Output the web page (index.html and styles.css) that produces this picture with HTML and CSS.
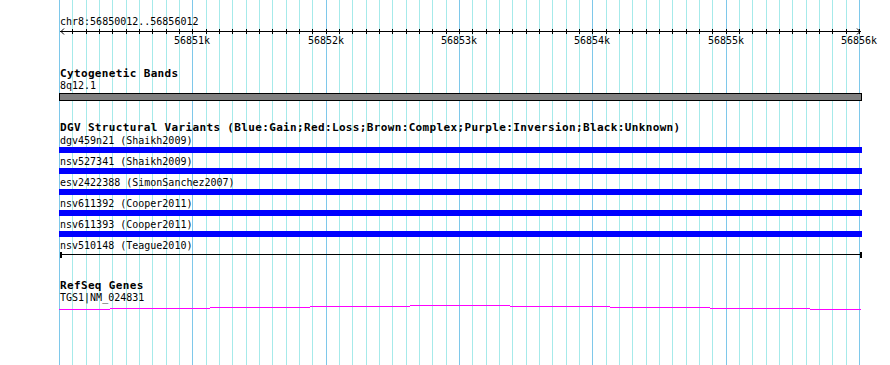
FILE: index.html
```html
<!DOCTYPE html>
<html lang="en">
<head>
    <meta charset="UTF-8">
    <title>chr8:56850012..56856012</title>
    <link rel="stylesheet" href="styles.css">
</head>
<body>
    <div class="canvas">
        <div class="ruler-title">chr8:56850012..56856012</div>
        <div class="scale">
            <svg class="arrow arrow-left" width="5" height="7" viewBox="0 0 5 7"><path d="M4 0.5 L1 3.5 L4 6.5" fill="none" stroke="#000" stroke-width="1"/></svg>
            <svg class="arrow arrow-right" width="5" height="7" viewBox="0 0 5 7"><path d="M1 0.5 L4 3.5 L1 6.5" fill="none" stroke="#000" stroke-width="1"/></svg>
        </div>
        <div class="scale-labels">
            <span class="tick-label" style="left: 133px">56851k</span>
            <span class="tick-label" style="left: 267px">56852k</span>
            <span class="tick-label" style="left: 400px">56853k</span>
            <span class="tick-label" style="left: 533px">56854k</span>
            <span class="tick-label" style="left: 667px">56855k</span>
            <span class="tick-label" style="left: 800px">56856k</span>
        </div>

        <div class="track track-bands">
            <div class="track-title">Cytogenetic Bands</div>
            <div class="band-label">8q12.1</div>
            <div class="band"></div>
        </div>

        <div class="track track-dgv">
            <div class="track-title">DGV Structural Variants (Blue:Gain;Red:Loss;Brown:Complex;Purple:Inversion;Black:Unknown)</div>
            <div class="feat-label">dgv459n21 (Shaikh2009)</div>
            <div class="feat-bar gain"></div>
            <div class="feat-label">nsv527341 (Shaikh2009)</div>
            <div class="feat-bar gain"></div>
            <div class="feat-label">esv2422388 (SimonSanchez2007)</div>
            <div class="feat-bar gain"></div>
            <div class="feat-label">nsv611392 (Cooper2011)</div>
            <div class="feat-bar gain"></div>
            <div class="feat-label">nsv611393 (Cooper2011)</div>
            <div class="feat-bar gain"></div>
            <div class="feat-label">nsv510148 (Teague2010)</div>
            <div class="feat-span"></div>
        </div>

        <div class="track track-genes">
            <div class="track-title">RefSeq Genes</div>
            <div class="gene-label">TGS1|NM_024831</div>
            <svg class="gene" width="803" height="7" viewBox="0 0 803 7" shape-rendering="crispEdges">
                <rect x="0" y="5" width="51" height="1" fill="#ff00ff"/>
                <rect x="51" y="4" width="100" height="1" fill="#ff00ff"/>
                <rect x="151" y="3" width="100" height="1" fill="#ff00ff"/>
                <rect x="251" y="2" width="100" height="1" fill="#ff00ff"/>
                <rect x="351" y="1" width="100" height="1" fill="#ff00ff"/>
                <rect x="451" y="2" width="100" height="1" fill="#ff00ff"/>
                <rect x="551" y="3" width="100" height="1" fill="#ff00ff"/>
                <rect x="651" y="4" width="100" height="1" fill="#ff00ff"/>
                <rect x="751" y="5" width="51" height="1" fill="#ff00ff"/>
            </svg>
        </div>
    </div>
</body>
</html>
```

FILE: styles.css
```css
body {
    margin: 0;
    background: #fff;
    color: #000;
    font-family: "DejaVu Sans Mono", "Liberation Mono", monospace;
    font-size: 10px;
}
.canvas {
    margin-left: 59px;
    width: 803px;
    height: 365px;
    background-image:
        linear-gradient(to right, #7ec8ea 0 1px, transparent 1px 133px, #7ec8ea 133px 134px, transparent 134px 267px, #7ec8ea 267px 268px, transparent 268px),
        linear-gradient(to right, #a6eaea 0 1px, transparent 1px 13px, #a6eaea 13px 14px, transparent 14px 27px, #a6eaea 27px 28px, transparent 28px);
    background-size: 400px 100%, 40px 100%;
    background-repeat: repeat-x;
}
.ruler-title {
    padding-top: 15px;
    padding-left: 1px;
    height: 13px;
    line-height: 13px;
}
.scale {
    position: relative;
    margin-top: 1px;
    margin-left: 1px;
    width: 801px;
    height: 5px;
    background-image:
        linear-gradient(#000, #000),
        linear-gradient(to right, transparent 0 12px, #000 12px 13px, transparent 13px 26px, #000 26px 27px, transparent 27px 39px, #000 39px 40px);
    background-size: 100% 1px, 40px 100%;
    background-position: 0 2px, 0 0;
    background-repeat: no-repeat, repeat-x;
}
.arrow {
    position: absolute;
    top: -1px;
}
.arrow-left {
    left: 0;
}
.arrow-right {
    right: 0;
}
.scale-labels {
    position: relative;
    height: 13px;
    line-height: 13px;
}
.tick-label {
    position: absolute;
    top: 0;
    transform: translateX(-50%);
    white-space: nowrap;
}
.track-title {
    padding-left: 1px;
    height: 12px;
    line-height: 12px;
    font-size: 11px;
    font-weight: bold;
    letter-spacing: 0.35px;
    white-space: nowrap;
}
.track-bands {
    margin-top: 21px;
}
.band-label {
    padding-left: 1px;
    height: 11px;
    line-height: 11px;
}
.band {
    margin-top: 2px;
    height: 6px;
    border: 1px solid #000;
    background: #808080;
}
.track-dgv {
    margin-top: 21px;
}
.feat-label {
    padding-left: 1px;
    height: 13px;
    line-height: 13px;
}
.feat-bar {
    height: 6px;
    margin-bottom: 2px;
}
.gain {
    background: #0000ff;
}
.feat-span {
    margin-left: 1px;
    width: 802px;
    height: 6px;
    background-image:
        linear-gradient(#000, #000),
        linear-gradient(#000, #000),
        linear-gradient(#000, #000);
    background-size: 100% 1px, 2px 100%, 2px 100%;
    background-position: 0 2px, 0 0, 100% 0;
    background-repeat: no-repeat;
}
.track-genes {
    margin-top: 22px;
}
.gene-label {
    padding-left: 1px;
    height: 12px;
    line-height: 12px;
}
.gene {
    display: block;
}
```
